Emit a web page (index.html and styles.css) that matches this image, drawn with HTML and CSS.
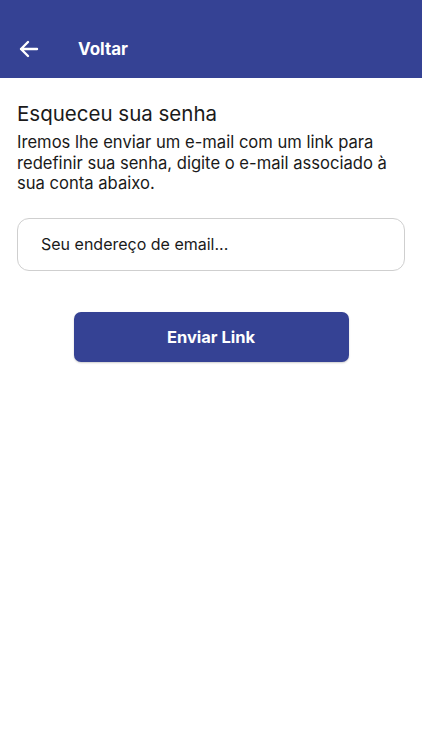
FILE: index.html
```html
<!DOCTYPE html>
<html lang="pt">

<head>
    <meta charset="UTF-8">
    <meta name="viewport" content="width=device-width, initial-scale=1.0">
    <title>Esqueceu sua senha</title>
    <link rel="stylesheet" href="styles.css">
</head>

<body>

    <div class="header">
        <svg class="back-icon" width="24" height="24" viewBox="0 0 24 24">
            <path d="M20 12H4M11 5l-7 7 7 7" fill="none" stroke="#fff" stroke-width="2.4" stroke-linecap="round" stroke-linejoin="round" />
        </svg>
        <span class="header-title">Voltar</span>
    </div>

    <div class="container">
        <h1>Esqueceu sua senha</h1>
        <p class="description">Iremos lhe enviar um e-mail com um link para redefinir sua senha, digite o e-mail associado à sua conta abaixo.</p>

        <input type="text" class="email-input" placeholder="Seu endereço de email...">

        <button class="send-button">Enviar Link</button>
    </div>

</body>

</html>
```

FILE: styles.css
```css
body {
    font-family: Inter, "Noto Sans", sans-serif;
    margin: 0;
    padding: 0;
    background-color: #ffffff;
    color: #1a1a1a;
}

.header {
    height: 78px;
    background-color: #354294;
    display: flex;
    align-items: center;
    padding: 20px 17px 0;
    box-sizing: border-box;
}

.back-icon {
    margin-right: 37px;
}

.header-title {
    color: #ffffff;
    font-weight: 700;
    font-size: 17px;
}

.container {
    padding: 23px 17px;
}

h1 {
    font-size: 20.5px;
    font-weight: 400;
    margin: 0 0 6px;
    color: #1a1a1a;
}

.description {
    font-size: 16.6px;
    line-height: 20.5px;
    margin: 0 0 24px;
    color: #1a1a1a;
}

.email-input {
    display: block;
    width: 100%;
    height: 53px;
    box-sizing: border-box;
    border: 1px solid #cfcfcf;
    border-radius: 12px;
    padding: 0 23px;
    font-family: inherit;
    font-size: 16px;
    outline: none;
}

.email-input::placeholder {
    color: #1a1a1a;
}

.send-button {
    display: block;
    width: 275px;
    height: 50px;
    margin: 41px auto 0;
    border: none;
    border-radius: 7px;
    background-color: #354294;
    color: #ffffff;
    font-family: inherit;
    font-size: 16.5px;
    font-weight: 700;
    box-shadow: 0 1px 2px rgba(0, 0, 0, 0.2);
}
```
